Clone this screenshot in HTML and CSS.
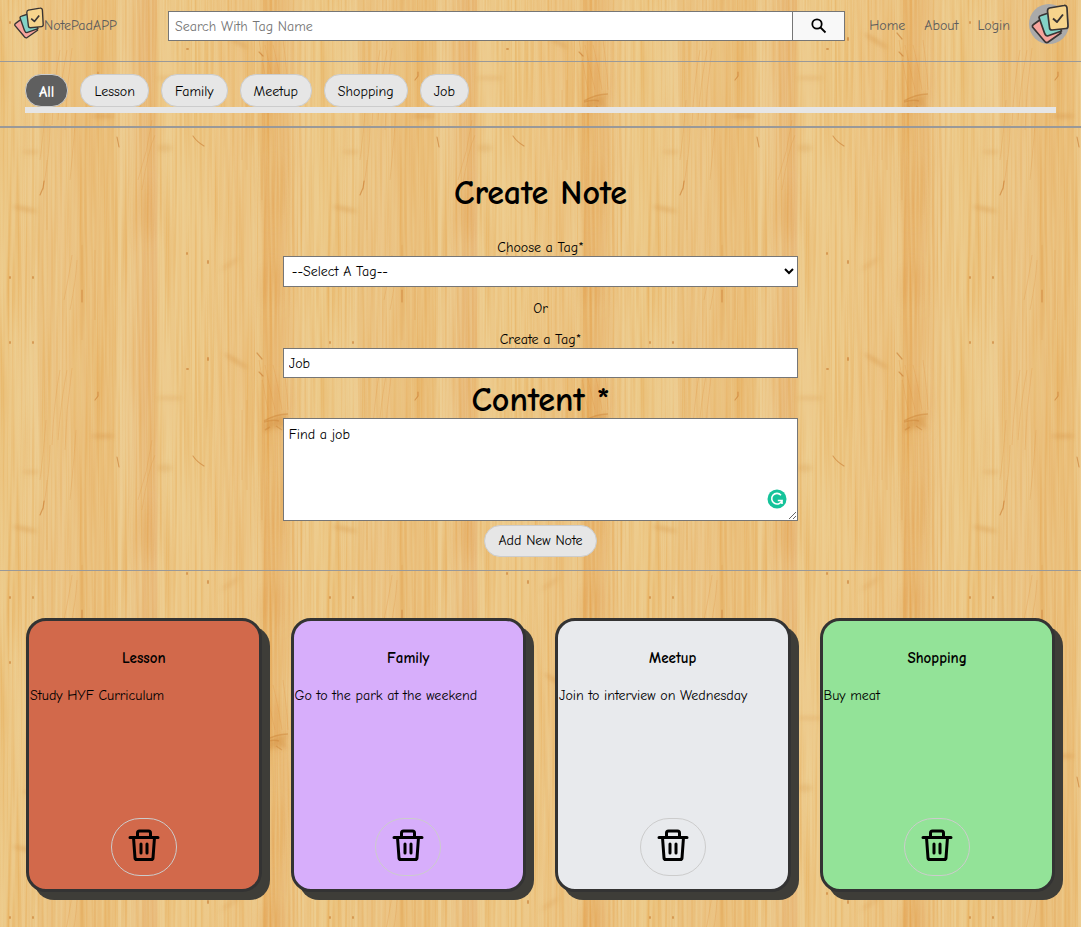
FILE: index.html
```html
<!DOCTYPE html>
<html lang="en">
<head>
<meta charset="utf-8">
<title>NotePadAPP</title>
<link rel="stylesheet" href="styles.css">
</head>
<body>
<svg class="wood" aria-hidden="true">
  <defs>
    <linearGradient id="planks" x1="0" x2="1" y1="0" y2="0">
      <stop offset="0" stop-color="#edca8a"/>
      <stop offset=".02" stop-color="#ecc684"/>
      <stop offset=".118" stop-color="#edcc91"/>
      <stop offset=".125" stop-color="#eac180"/>
      <stop offset=".2" stop-color="#ecc689"/>
      <stop offset=".25" stop-color="#eabe7b"/>
      <stop offset=".35" stop-color="#eabd78"/>
      <stop offset=".375" stop-color="#edcc91"/>
      <stop offset=".41" stop-color="#ecc78b"/>
      <stop offset=".46" stop-color="#e8b878"/>
      <stop offset=".488" stop-color="#e9bb7c"/>
      <stop offset=".495" stop-color="#edcb8e"/>
      <stop offset=".62" stop-color="#edc989"/>
      <stop offset=".75" stop-color="#ecc383"/>
      <stop offset=".815" stop-color="#ecc788"/>
      <stop offset=".825" stop-color="#e7b167"/>
      <stop offset=".88" stop-color="#e9bb79"/>
      <stop offset=".95" stop-color="#edcb8f"/>
      <stop offset="1" stop-color="#edca8a"/>
    </linearGradient>
    <filter id="grain" x="0" y="0" width="100%" height="100%" color-interpolation-filters="sRGB">
      <feTurbulence type="fractalNoise" baseFrequency=".4 .006" numOctaves="2" seed="8" stitchTiles="stitch"/>
      <feColorMatrix values="0 0 0 0 .89  0 0 0 0 .62  0 0 0 0 .25  1 0 0 0 -.4"/>
    </filter>
    <filter id="shine" x="0" y="0" width="100%" height="100%" color-interpolation-filters="sRGB">
      <feTurbulence type="fractalNoise" baseFrequency=".4 .009" numOctaves="2" seed="21" stitchTiles="stitch"/>
      <feColorMatrix values="0 0 0 0 .93  0 0 0 0 .83  0 0 0 0 .6  1 0 0 0 -.38"/>
    </filter>
    <filter id="soft" x="-50%" y="-50%" width="200%" height="200%"><feGaussianBlur stdDeviation="2"/></filter>
    <filter id="softer" x="-50%" y="-50%" width="200%" height="200%"><feGaussianBlur stdDeviation="7"/></filter>
    <pattern id="tile" width="320" height="320" patternUnits="userSpaceOnUse">
      <rect width="320" height="320" fill="url(#planks)"/>
      <g filter="url(#softer)" fill="#e2a357" opacity=".4">
        <ellipse cx="148" cy="210" rx="7" ry="30"/>
        <ellipse cx="272" cy="285" rx="10" ry="22"/>
        <ellipse cx="274" cy="190" rx="8" ry="30"/>
        <ellipse cx="276" cy="85" rx="14" ry="26"/>
      </g>
      <rect width="320" height="320" filter="url(#grain)"/>
      <rect width="320" height="320" filter="url(#shine)"/>
      <g fill="none" stroke="#dd9440" stroke-width="1" opacity=".28">
        <path d="M40 160Q44 130 46 100M43 190Q50 150 50 125M47 230V160M52 125Q54 80 60 50M58 120Q61 80 67 50M65 130Q66 90 72 48M70 180Q74 140 76 110M64 300Q70 270 72 255M70 310Q76 280 77 260M82 245V320M82 0V20M95 250V320M142 190Q148 150 155 135M138 180Q148 150 152 120M242 160V90M247 170V80M262 200V60M268 90Q262 60 259 40M275 90Q268 60 265 45M282 90Q277 60 273 45M288 90Q286 60 283 40"/>
      </g>
      <g filter="url(#soft)" fill="#d08b3a" opacity=".4">
        <path d="M264 103q14-9 25-8q-8 5-1 14q-12-6-24 5z"/>
        <ellipse cx="25" cy="209" rx="13" ry="2" transform="rotate(12 25 209)"/>
        <ellipse cx="31" cy="152" rx="9" ry="2" opacity=".6"/>
        <ellipse cx="170" cy="78" rx="14" ry="2" opacity=".6"/>
        <ellipse cx="103" cy="116" rx="12" ry="2"/>
        <ellipse cx="165" cy="148" rx="8" ry="4" opacity=".5"/>
        <ellipse cx="236" cy="41" rx="14" ry="2" transform="rotate(32 236 41)"/>
        <ellipse cx="230" cy="264" rx="11" ry="2" transform="rotate(-35 230 264)" opacity=".6"/>
      </g>
      <path d="M264 101q12-7 24-7M264 102q9-3 15-1M265 110l5-3M276 106l6 4" fill="none" stroke="#c87e30" stroke-width="1.5" opacity=".4"/>
      <g fill="none" stroke="#c5752a" stroke-width="1.2" stroke-linecap="round" opacity=".55">
        <path d="M44 181l-1 7l-3 7M82 290v12M98 72v4l-3 4M117 137l2 10M193 136q4 6 11 10M259 52l4 4M257 33l5 6"/>
        <path d="M10 23v-1M33 23v-1M10 277v1M33 277v1M187 253v1M208 261v2M187 49h1M208 38v2" stroke-width="2"/>
      </g>
    </pattern>
    <symbol id="notes" viewBox="0 0 40 40">
      <g stroke="#383433" stroke-width="1.7" stroke-linejoin="round">
        <path d="M4.500 20.500L17.500 11L32 29L18.500 38.500Q16.500 39 14.500 36L3.500 23Q3 21.500 4.500 20.500Z" fill="#f7a49d"/>
        <path d="M12 11.500L24 7.500L32.500 27L18.500 32Q16.500 32 15.500 29L10 13.500Q10 12 12 11.500Z" fill="#83d3c7"/>
        <path d="M20.500 4L35 1.500Q37.500 1 38 4L39 22Q39 24.500 37 24.500L23 26Q20.500 26 20.500 23.500L18.500 7Q18.500 4.500 20.500 4Z" fill="#f6d48c"/>
        <path d="M24 14.500l4 3.500l6-7.500" fill="none" stroke-width="2"/>
      </g>
    </symbol>
    <symbol id="trash" viewBox="0 0 32 32">
      <g fill="none" stroke="#000" stroke-width="3" stroke-linecap="round" stroke-linejoin="round">
        <path d="M2 8.500H30M5.500 8.500L7 29Q7.200 30.500 8.500 30.500H23.500Q24.800 30.500 25 29L26.500 8.500M9.500 8V4Q9.500 2 11.500 2H20.500Q22.500 2 22.500 4V8"/>
        <path d="M13 15V24M19 15V24"/>
      </g>
    </symbol>
  </defs>
  <rect width="100%" height="100%" fill="url(#tile)"/>
</svg>

<header class="header">
  <a class="brand" href="#"><svg class="brand-icon" aria-hidden="true"><use href="#notes"/></svg>NotePadAPP</a>
  <form class="search">
    <input class="search-input" type="text" placeholder="Search With Tag Name" aria-label="Search With Tag Name">
    <button class="search-button" type="button" aria-label="Search">
      <svg width="18" height="18" viewBox="0 0 18 18" fill="none" stroke="#000" stroke-width="1.800"><circle cx="7" cy="7" r="4.700"/><path d="M10.500 10.500L15.500 15.500"/></svg>
    </button>
  </form>
  <nav class="nav">
    <a href="#">Home</a>
    <a href="#">About</a>
    <a href="#">Login</a>
    <a class="avatar" href="#" aria-label="Profile"><svg aria-hidden="true"><use href="#notes"/></svg></a>
  </nav>
</header>

<section class="filters">
  <div class="filter-list">
    <button class="pill active" type="button">All</button>
    <button class="pill" type="button">Lesson</button>
    <button class="pill" type="button">Family</button>
    <button class="pill" type="button">Meetup</button>
    <button class="pill" type="button">Shopping</button>
    <button class="pill" type="button">Job</button>
  </div>
</section>

<main>
  <form class="create">
    <h1 class="title">Create Note</h1>
    <label class="label" for="tag">Choose a Tag*</label>
    <select class="field" id="tag"><option>--Select A Tag--</option></select>
    <p class="or">Or</p>
    <label class="label" for="new-tag">Create a Tag*</label>
    <input class="field" id="new-tag" type="text" value="Job">
    <label class="content-label" for="content">Content *</label>
    <div class="editor">
      <textarea class="field area" id="content">Find a job</textarea>
      <svg class="checker" viewBox="0 0 20 20" aria-hidden="true"><circle cx="10" cy="10" r="9.500" fill="#15c39a"/><path d="M14 6.200A5.300 5.300 0 1 0 15 11.500H10.800M15 11.500V15" fill="none" stroke="#fff" stroke-width="1.600"/></svg>
    </div>
    <button class="pill add" type="button">Add New Note</button>
  </form>

  <section class="cards">
    <article class="card lesson">
      <h2>Lesson</h2><p>Study HYF Curriculum</p>
      <button class="delete" type="button" aria-label="Delete Lesson"><svg><use href="#trash"/></svg></button>
    </article>
    <article class="card family">
      <h2>Family</h2><p>Go to the park at the weekend</p>
      <button class="delete" type="button" aria-label="Delete Family"><svg><use href="#trash"/></svg></button>
    </article>
    <article class="card meetup">
      <h2>Meetup</h2><p>Join to interview on Wednesday</p>
      <button class="delete" type="button" aria-label="Delete Meetup"><svg><use href="#trash"/></svg></button>
    </article>
    <article class="card shopping">
      <h2>Shopping</h2><p>Buy meat</p>
      <button class="delete" type="button" aria-label="Delete Shopping"><svg><use href="#trash"/></svg></button>
    </article>
  </section>
</main>
</body>
</html>
```
FILE: styles.css
```css
* {
  box-sizing: border-box;
}

body {
  position: relative;
  min-height: 100vh;
  margin: 0;
  background: #ebc486;
  color: #000;
  font-family: "Comic Neue", Lato, sans-serif;
  font-size: 14px;
  line-height: 18px;
}

button,
input,
select,
textarea {
  font: inherit;
  color: inherit;
}

.wood {
  position: absolute;
  inset: 0;
  z-index: -1;
  width: 100%;
  height: 100%;
}

.header {
  display: flex;
  align-items: center;
  height: 62px;
  padding: 0 12px 9px;
  border-bottom: 1px solid #999;
}

.brand {
  display: flex;
  align-items: center;
  width: 156px;
  color: #5c5c5c;
  text-decoration: none;
}

.brand-icon {
  width: 32px;
  height: 32px;
  margin-bottom: 6px;
}

.search {
  display: flex;
  flex: 1;
  height: 30px;
}

.search-input {
  flex: 1;
  min-width: 0;
  padding: 1px 6px 0;
  border: 1px solid #767676;
  border-right: 0;
  border-radius: 0;
  background: #fff;
}

.search-input::placeholder {
  color: #757575;
}

.search-button {
  display: flex;
  align-items: center;
  justify-content: center;
  width: 53px;
  padding: 0;
  border: 1px solid #767676;
  background: #f8f8f8;
}

.nav {
  display: flex;
  align-items: center;
  gap: 19px;
  padding-left: 24px;
}

.nav a {
  color: #5c5c5c;
  text-decoration: none;
}

.nav .avatar {
  width: 40px;
  height: 40px;
  margin-bottom: 4px;
  border-radius: 50%;
  background: #aaa;
}

.avatar svg {
  display: block;
  width: 40px;
  height: 40px;
}

.filters {
  padding: 12px 25px 13px;
  border-bottom: 2px solid #999;
}

.filter-list {
  display: flex;
  gap: 12px;
  border-bottom: 6px solid #e6e6e6;
}

.pill {
  height: 33px;
  padding: 2px 13px 0;
  border: 1px solid #ccc;
  border-radius: 16px;
  background: #e6e6e6;
}

.pill.active {
  background: #5f5f5f;
  color: #fff;
  font-size: 15px;
  font-weight: 700;
}

.create {
  display: flex;
  flex-direction: column;
  align-items: center;
  padding: 45px 25px 13px;
  border-bottom: 1px solid #999;
}

.title {
  margin: 0 0 26px;
  font-size: 34px;
  line-height: 40px;
}

.label {
  line-height: 17px;
}

.field {
  width: 50%;
  height: 30px;
  padding: 0 5px;
  border: 1px solid #767676;
  border-radius: 0;
  background: #fff;
}

select.field {
  height: 31px;
  padding: 0 4px;
}

.or {
  margin: 13px 0;
}

.content-label {
  padding-top: 4px;
  font-size: 34px;
  font-weight: 700;
  line-height: 36px;
}

.editor {
  position: relative;
  width: 50%;
}

.area {
  display: block;
  width: 100%;
  height: 103px;
  padding: 7px 5px;
}

.checker {
  position: absolute;
  right: 11px;
  bottom: 12px;
  width: 20px;
  height: 20px;
}

.add {
  height: 32px;
  margin-top: 4px;
  padding: 0 13px;
}

.cards {
  display: grid;
  grid-template-columns: repeat(4, 1fr);
  gap: 29px;
  padding: 47px 26px 35px;
}

.card {
  display: flex;
  flex-direction: column;
  min-height: 274px;
  padding-bottom: 13px;
  border: 3px solid #333;
  border-radius: 20px;
  box-shadow: 8px 8px #3e3d38;
}

.card h2 {
  margin: 28px 0 20px;
  font-size: 15px;
  line-height: 18px;
  text-align: center;
}

.card p {
  margin: 0;
  padding-left: 1px;
}

.lesson {
  background: #d2694b;
}

.family {
  background: #d7aefb;
}

.meetup {
  background: #e8eaed;
}

.shopping {
  background: #93e398;
}

.delete {
  display: flex;
  align-items: center;
  justify-content: center;
  align-self: center;
  width: 66px;
  height: 58px;
  margin-top: auto;
  padding: 0 0 4px;
  border: 1px solid #ccc;
  border-radius: 29px;
  background: none;
}

.delete svg {
  width: 32px;
  height: 32px;
}
```
